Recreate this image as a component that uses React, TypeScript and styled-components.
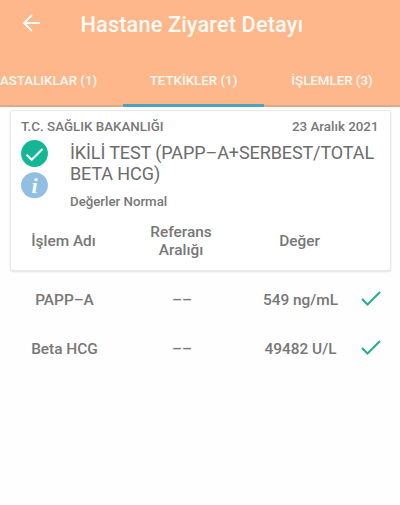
import React from "react";
import styled, { createGlobalStyle } from "styled-components";

const GlobalStyle = createGlobalStyle`
  * { box-sizing: border-box; }
  body { margin: 0; background: #fefefe; }
`;

const Screen = styled.div`
  width: 400px;
  height: 505px;
  overflow: hidden;
  background: #fefefe;
  color: #777;
  font-family: Roboto, "Noto Sans", sans-serif;
  font-weight: 500;
  white-space: nowrap;
`;

const Header = styled.header`
  height: 107px;
  background: #feb68b;
  color: #fffaf3;
`;

const Toolbar = styled.div`
  display: flex;
  align-items: center;
  height: 48px;
  padding-left: 21px;
`;

const BackIcon = styled.svg`
  width: 20px;
  height: 20px;
  margin-top: -2px;
  fill: none;
  stroke: currentColor;
  stroke-width: 2;
`;

const Title = styled.h1`
  margin: 2px 0 0 39.5px;
  font-size: 21.8px;
  line-height: 24px;
  font-weight: 500;
  letter-spacing: 0.1px;
`;

const Tabs = styled.nav`
  display: grid;
  grid-template-columns: 123px 141px 136px;
  height: 59px;
`;

const Tab = styled.div<{ $active?: boolean; $align?: string }>`
  display: flex;
  justify-content: ${(p) => p.$align ?? "center"};
  padding-top: 25px;
  font-size: 13.3px;
  line-height: 16px;
  border-bottom: ${(p) => (p.$active ? "3px solid #4ba3bd" : "2px solid #dfa987")};
`;

const Card = styled.section`
  width: 381px;
  height: 161px;
  margin: 3px 0 0 9.5px;
  padding: 8px 11px 0 10.5px;
  border: 1px solid #e8e8e8;
  border-radius: 3px;
  background: #fff;
  box-shadow: 0 1px 2px rgba(0, 0, 0, 0.12);
`;

const CardTop = styled.div`
  display: flex;
  justify-content: space-between;
  font-size: 13.35px;
  line-height: 16px;
`;

const Summary = styled.div`
  display: flex;
  gap: 22px;
  margin-top: 5px;
`;

const StatusColumn = styled.div`
  display: flex;
  flex-direction: column;
  gap: 5px;
`;

const StatusIcon = styled.svg`
  display: block;
  width: 27px;
  height: 27px;
`;

const InfoGlyph = styled.text`
  font: italic bold 22px "Liberation Serif", serif;
  fill: #fff;
  text-anchor: middle;
`;

const TestName = styled.h2`
  margin: 2px 0 0;
  font-size: 18px;
  line-height: 21.3px;
  font-weight: 400;
  letter-spacing: -0.1px;
  color: #6c6c6c;
`;

const Result = styled.div`
  margin-top: 9px;
  font-size: 13.25px;
  line-height: 15px;
`;

const Row = styled.div`
  display: grid;
  grid-template-columns: 108px 127px 110px 1fr;
  align-items: center;
  height: 49px;
  margin-left: 10.5px;
  font-size: 15.4px;
  line-height: 18px;
  text-align: center;
`;

const HeadRow = styled(Row)`
  height: 40px;
  margin: 12px 0 0 -11.5px;
`;

const CheckIcon = styled.svg`
  width: 20px;
  height: 15px;
  margin: -2px 0 0 5px;
  fill: none;
  stroke: #24ad92;
  stroke-width: 2;
`;

const TableBody = styled.div`
  padding-top: 4px;
`;

const rows = [
  { name: "PAPP–A", range: "––", value: "549 ng/mL" },
  { name: "Beta HCG", range: "––", value: "49482 U/L" },
];

export default function App() {
  return (
    <>
      <GlobalStyle />
      <Screen>
        <Header>
          <Toolbar>
            <BackIcon viewBox="0 0 20 20">
              <path d="M19 10H3M11 2L3 10l8 8" />
            </BackIcon>
            <Title>Hastane Ziyaret Detayı</Title>
          </Toolbar>
          <Tabs>
            <Tab $align="flex-start">ASTALIKLAR (1)</Tab>
            <Tab $active>TETKİKLER (1)</Tab>
            <Tab>İŞLEMLER (3)</Tab>
          </Tabs>
        </Header>
        <Card>
          <CardTop>
            <span>T.C. SAĞLIK BAKANLIĞI</span>
            <span>23 Aralık 2021</span>
          </CardTop>
          <Summary>
            <StatusColumn>
              <StatusIcon viewBox="0 0 27 27">
                <circle cx="13.5" cy="13.5" r="13.4" fill="#14b795" />
                <path d="M5.5 14.8l5.2 5L21.5 9" fill="none" stroke="#fff" strokeWidth="2.1" />
              </StatusIcon>
              <StatusIcon viewBox="0 0 27 27">
                <ellipse cx="13.5" cy="13.2" rx="13.4" ry="13" fill="#91bfe1" />
                <InfoGlyph x="13.5" y="20.5">i</InfoGlyph>
              </StatusIcon>
            </StatusColumn>
            <div>
              <TestName>
                İKİLİ TEST (PAPP–A+SERBEST/TOTAL
                <br />
                BETA HCG)
              </TestName>
              <Result>Değerler Normal</Result>
            </div>
          </Summary>
          <HeadRow>
            <span>İşlem Adı</span>
            <span>
              Referans
              <br />
              Aralığı
            </span>
            <span>Değer</span>
          </HeadRow>
        </Card>
        <TableBody>
          {rows.map((row) => (
            <Row key={row.name}>
              <span>{row.name}</span>
              <span>{row.range}</span>
              <span>{row.value}</span>
              <CheckIcon viewBox="0 0 20 15">
                <path d="M1 8l5.5 5.5L19 1" />
              </CheckIcon>
            </Row>
          ))}
        </TableBody>
      </Screen>
    </>
  );
}
